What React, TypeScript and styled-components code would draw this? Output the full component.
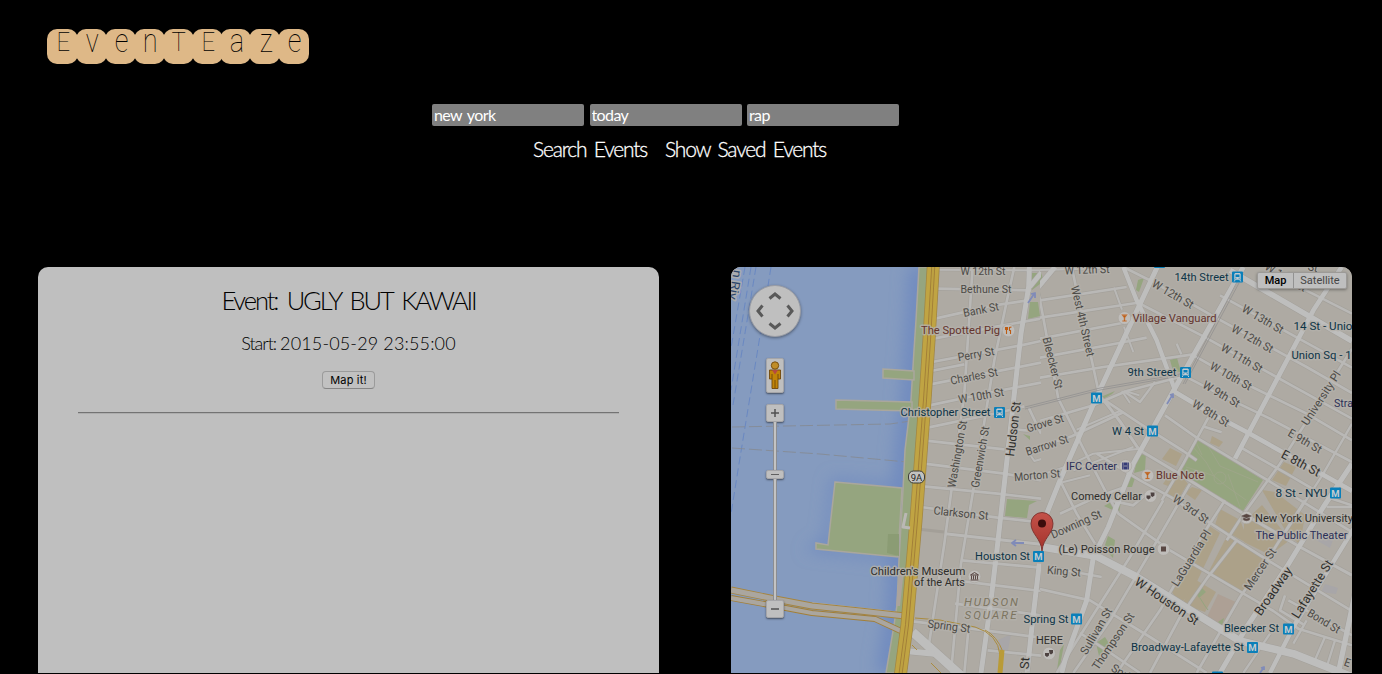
import React from "react";
import styled, { createGlobalStyle } from "styled-components";

const GlobalStyle = createGlobalStyle`
  * { box-sizing: border-box; }
  html, body { margin: 0; background: #000; overflow: hidden; }
`;

const Page = styled.div`
  display: flex;
  flex-direction: column;
  width: 1382px;
  height: 674px;
  padding-bottom: 1px;
  overflow: hidden;
  background: #000;
  font-family: Lato, "Open Sans", sans-serif;
`;

const Header = styled.header`
  display: flex;
  padding: 28.5px 0 0 47px;
  height: 104px;
`;

const LogoTile = styled.span`
  display: flex;
  justify-content: center;
  width: 31px;
  height: 35.5px;
  margin-right: -2.1px;
  border-radius: 10px;
  background: burlywood;
`;

const LogoLetter = styled.span<{ $small?: boolean }>`
  font-family: Roboto, sans-serif;
  font-weight: 100;
  font-size: ${(p) => (p.$small ? 34 : 26)}px;
  line-height: ${(p) => (p.$small ? 22 : 27.5)}px;
  transform: translateX(1px) scaleX(${(p) => (p.$small ? 0.8 : 0.92)});
  color: #000;
`;

const SearchArea = styled.section`
  display: flex;
  flex-direction: column;
  height: 163px;
`;

const Fields = styled.div`
  display: flex;
  gap: 5.5px;
  padding-left: 432px;
`;

const Field = styled.input`
  width: 152px;
  height: 22px;
  padding: 0 2px 1px;
  border: 0;
  border-radius: 2px;
  background: #808080;
  color: #fff;
  font-family: Lato, sans-serif;
  font-size: 16px;
  letter-spacing: -0.6px;
  word-spacing: 2px;
  outline: none;
`;

const Actions = styled.div`
  display: flex;
  gap: 17px;
  padding: 9px 0 0 533px;
`;

const Action = styled.button<{ $w: number }>`
  width: ${(p) => p.$w}px;
  padding: 0;
  border: 0;
  background: none;
  color: #fff;
  font-family: Lato, sans-serif;
  font-size: 21px;
  font-weight: 300;
  -webkit-text-stroke: 0.3px #fff;
  letter-spacing: -1.2px;
  word-spacing: 3px;
  line-height: 28px;
  text-align: left;
  white-space: nowrap;
`;

const Panels = styled.main`
  display: flex;
  flex: 1;
  gap: 72px;
  padding-left: 38px;
  min-height: 0;
`;

const EventPanel = styled.section`
  display: flex;
  flex-direction: column;
  align-items: center;
  width: 621px;
  padding: 0 40px;
  border-radius: 10px 10px 0 0;
  background: #bfbfbf;
  color: #000;
`;

const Title = styled.h2`
  margin: 18px 0 0;
  font-size: 25.5px;
  font-weight: 300;
  letter-spacing: -2.1px;
  word-spacing: 4.5px;
  line-height: 31px;
  white-space: nowrap;
`;

const Start = styled.p`
  margin: 15px 0 0;
  font-size: 18px;
  font-weight: 300;
  line-height: 24px;
`;

const StartLabel = styled.span`
  margin-right: -1px;
  letter-spacing: -1px;
`;

const StartTime = styled.span`
  letter-spacing: 0.14px;
`;

const MapIt = styled.button`
  width: 53px;
  height: 18px;
  margin-top: 16px;
  padding: 0;
  border: 1px solid #9b9b9b;
  border-bottom-color: #858585;
  border-radius: 4px;
  background: #c1c1c1;
  font-family: Inter, sans-serif;
  font-size: 11px;
  letter-spacing: 0.15px;
  line-height: 15px;
  color: #000;
`;

const Divider = styled.hr`
  width: 100%;
  height: 2px;
  margin: 23px 0 0;
  border: 0;
  border-top: 1px solid #737373;
  border-bottom: 1px solid #adadad;
`;

const MapPanel = styled.section`
  position: relative;
  width: 621px;
  overflow: hidden;
  border-radius: 10px 10px 0 0;
  background: #aeaaa3;
`;

const MapCanvas = styled.svg`
  display: block;
  width: 621px;
  height: 406px;
  font-family: Roboto, sans-serif;
`;

const Controls = styled.div`
  position: absolute;
  top: 18px;
  left: 18px;
  display: flex;
  flex-direction: column;
  align-items: center;
  width: 52px;
`;

const PanWheel = styled.div`
  width: 52px;
  height: 52px;
  border-radius: 50%;
  border: 1px solid #9a9da5;
  background: #bfbfbf;
  box-shadow: 0 1px 3px rgba(0, 0, 0, 0.4);
`;

const Box = styled.div<{ $h: number; $mt?: number }>`
  display: flex;
  align-items: center;
  justify-content: center;
  width: 18px;
  height: ${(p) => p.$h}px;
  margin-top: ${(p) => p.$mt ?? 0}px;
  border: 1px solid #a5a5a8;
  border-radius: 2px;
  background: #bfbfbf;
  box-shadow: 0 1px 2px rgba(0, 0, 0, 0.5);
`;

const Rail = styled.div<{ $h: number }>`
  width: 4px;
  height: ${(p) => p.$h}px;
  border: solid #8b8d92;
  border-width: 0 1px;
  background: #c3c3c3;
`;

const TypeSwitch = styled.div`
  position: absolute;
  top: 5px;
  left: 526px;
  display: flex;
  height: 17px;
  border: 1px solid #9c9a97;
  border-radius: 2px;
  background: #bfbfbf;
  box-shadow: 0 1px 3px rgba(0, 0, 0, 0.35);
`;

const TypeOption = styled.button<{ $w: number; $on?: boolean }>`
  width: ${(p) => p.$w}px;
  padding: 0;
  border: 0;
  border-right: ${(p) => (p.$on ? "1px solid #929292" : "0")};
  background: none;
  font-family: Roboto, sans-serif;
  font-size: 11px;
  font-weight: ${(p) => (p.$on ? 500 : 400)};
  line-height: 15px;
  color: ${(p) => (p.$on ? "#000" : "#454545")};
`;

type Street = [string, number];

// Streets are drawn at three units per pixel, one sheet for each half of the map.
const westStreets: Street[] = [
  ["M620 8L930 10", 7],
  ["M618 65L900 70", 9],
  ["M612 155L790 115L890 100", 9],
  ["M608 215L800 178L930 155", 9],
  ["M603 285L870 235L930 222", 9],
  ["M600 312L700 292", 9],
  ["M598 352L930 287", 9],
  ["M595 415L800 372L930 347", 9],
  ["M590 482L800 438L880 418", 9],
  ["M585 521L820 547", 9],
  ["M580 590L820 620L930 640", 9],
  ["M578 658L800 680L930 695", 9],
  ["M570 720L800 752L930 766", 9],
  ["M642 800L930 832", 10],
  ["M692 880L930 902", 9],
  ["M672 940L930 972", 9],
  ["M672 1010L930 1045", 9],
  ["M545 1063L720 1085L930 1112", 9],
  ["M770 1150L930 1166", 9],
  ["M725 0L700 380L660 680L640 830L595 1125", 9],
  ["M850 0L830 90L790 280L725 680L690 890L660 1218", 9],
  ["M712 1090L700 1218", 9],
  ["M893 422L930 500M860 488L905 492", 9],
  ["M892 555L910 582L935 575", 7],
];

const westAvenues: Street[] = [
  ["M895 0L893 60L870 200L830 560L800 830L780 1000L750 1218", 15],
  ["M896 60L945 0", 15],
  ["M925 890L905 1060L888 1218", 15],
  ["M545 1095L690 1226", 27],
  ["M500 1150L610 1160", 18],
];

const eastStreets: Street[] = [
  ["M-40 10L110 6L210 2", 7],
  ["M0 100L260 60", 9],
  ["M-100 165L0 152L288 108", 9],
  ["M0 215L262 165", 9],
  ["M-100 290L0 272L238 228L320 212", 9],
  ["M-100 352L0 332L190 300L460 262", 9],
  ["M222 62L246 128M252 180L280 255M246 372L270 408", 7],
  ["M410 230L424 262", 8],
  ["M0 462L160 415L260 372L420 330", 9],
  ["M-20 545L95 508L250 436", 9],
  ["M0 625L75 600L160 560L300 545", 7],
  ["M110 488L240 432M100 610L280 540", 7],
  ["M60 740L170 690L255 660", 9],
  ["M50 650L150 625", 7],
  ["M195 400L300 470L430 552L470 580", 9],
  ["M192 398L240 465L300 552", 9],
  ["M250 372L300 405L345 345", 8],
  ["M256 372L298 385", 7],
  ["M-25 0L0 100L55 395L130 545L200 680L235 740L390 850L580 962L700 1032L775 1085L936 1135", 9],
  ["M95 0L178 385L240 462L300 552", 9],
  ["M60 640L110 740L165 830", 9],
  ["M250 0L340 45L520 148L800 300L936 378", 9],
  ["M290 105L490 208L760 358L936 455", 9],
  ["M455 262L575 330L800 440L936 520", 9],
  ["M430 325L545 385L690 455L936 585", 9],
  ["M540 85L936 302", 9],
  ["M700 20L936 140", 9],
  ["M375 445L470 512L680 638L936 795", 9],
  ["M600 540L740 620L860 690L936 715", 9],
  ["M505 452L430 590L365 700", 9],
  ["M488 478L545 496", 9],
  ["M300 550L400 610L610 740L780 840L936 925", 10],
  ["M170 560L300 640L395 692L590 820L700 890L936 1032", 9],
  ["M210 700L280 715L320 680", 9],
  ["M-5 965L150 1000L330 1110L500 1218", 9],
  ["M120 1098L200 1150L300 1218", 9],
  ["M22 900L185 930", 9],
  ["M936 245L720 590L610 742L560 820", 9],
  ["M555 700L490 800L360 1030L230 1218", 9],
  ["M450 650L340 840L210 1060L100 1218", 9],
  ["M370 700L270 870L165 1035L50 1218", 9],
  ["M590 820L500 935L420 1050L330 1218", 9],
  ["M795 700L700 850L600 990L470 1218", 9],
  ["M936 470L850 620L720 820", 8],
  ["M860 720L936 720", 8],
  ["M735 985L720 1030L790 1072M745 1000L936 1105", 9],
  ["M800 1060L760 1130M855 1110L820 1190M885 1120L860 1200", 8],
  ["M690 1100L610 1218M740 1120L690 1218", 8],
];

const eastAvenues: Street[] = [
  ["M45 0L-30 90", 15],
  ["M352 0L172 385L60 640L0 790L-10 870L-30 1060L-48 1218", 15],
  ["M250 0L290 100L350 220L405 370", 13],
  ["M610 0L400 372L280 590L205 780L160 870L140 1000L75 1180L65 1218", 15],
  ["M905 0L820 130L630 490L585 575", 14],
  ["M570 10L820 155L936 222", 17],
  ["M400 372L515 440L620 495L936 672", 14],
  ["M936 590L850 720L740 900L620 1080L540 1218", 15],
  ["M950 770L760 1080L690 1218", 13],
  ["M-90 830L20 842L170 868L290 930L600 1122L760 1160L950 1235", 23],
  ["M945 980L895 1218", 16],
];

const parks = [
  "M1032 273L1041 273L1044 281L1032 290Z",
  "M1030 302L1038 302L1040 316L1028 319Z",
  "M1007 499L1037 501L1029 505L1027 518L1005 516Z",
  "M1197 438L1263 480L1243 511L1177 471Z",
  "M1104 506L1122 496L1119 513Z",
  "M1108 536L1115 540L1113 558L1104 548Z",
  "M1138 456L1146 453L1145 470L1134 473Z",
  "M1131 477L1136 475L1132 487L1127 487Z",
  "M1083 600L1090 600L1082 613Z",
  "M1096 643L1105 637L1110 645L1099 656Z",
  "M1060 650L1064 644L1060 666L1057 670Z",
  "M1170 360L1177 358L1181 372L1173 371Z",
  "M1196 593L1202 588L1206 592L1199 598Z",
  "M1218 622L1224 618L1222 626Z",
  "M1138 280L1144 278L1139 292L1136 290Z",
  "M1103 396L1115 391L1112 394L1103 399Z",
  "M1023 434L1030 440L1030 436L1026 435Z",
];

const campus = [
  "M1228 534L1268 559L1242 592L1208 573Z",
  "M1174 480L1186 486L1178 500L1163 494Z",
  "M1185 480L1188 484L1180 491L1163 484L1172 470Z",
  "M1192 487L1202 490L1195 500L1185 493Z",
  "M1208 525L1220 533L1192 592L1180 604L1172 592Z",
  "M1220 509L1240 520L1250 545L1215 525Z",
  "M1244 522L1262 505L1290 540L1270 555L1244 542Z",
  "M1284 462L1296 467L1286 486L1272 480Z",
  "M1262 490L1275 492L1305 515L1300 545L1285 530Z",
  "M1170 448L1182 454L1176 466L1162 459Z",
  "M1212 436L1223 442L1219 447L1210 443Z",
  "M1196 580L1216 592L1205 612L1182 604Z",
];

const NAVY = "#0d3447";
const BROWN = "#64342d";
const INDIGO = "#2c3058";
const GREY = "#4c4a46";
const DARK = "#2f2e2b";

type Label = {
  t: string; x: number; y: number; w: number; r?: number; c?: string; s?: number; italic?: boolean;
};

const labels: Label[] = [
  { t: "W 12th St", x: 983, y: 270.5, w: 45 },
  { t: "W 12th St", x: 1087, y: 269.5, w: 45, r: -2 },
  { t: "Bethune St", x: 986, y: 289, w: 51 },
  { t: "Bank St", x: 981, y: 309.5, w: 36, r: -11 },
  { t: "The Spotted Pig", x: 960.5, y: 330, w: 79, c: BROWN },
  { t: "Perry St", x: 976, y: 354, w: 37, r: -10 },
  { t: "Charles St", x: 974, y: 376, w: 48, r: -11 },
  { t: "W 10th St", x: 981, y: 395.5, w: 46, r: -10 },
  { t: "Christopher Street", x: 945.5, y: 412, w: 90, c: NAVY },
  { t: "Hudson St", x: 1013, y: 429, w: 55, r: -83, s: 12.5, c: DARK },
  { t: "Bleecker St", x: 1053, y: 363, w: 53, r: 76 },
  { t: "West 4th Street", x: 1083, y: 321, w: 72, r: 77 },
  { t: "Grove St", x: 1045, y: 423, w: 38, r: -17 },
  { t: "Barrow St", x: 1047, y: 445, w: 44, r: -18 },
  { t: "Morton St", x: 1037, y: 475, w: 46, r: -5 },
  { t: "Clarkson St", x: 961, y: 513, w: 55, r: 6 },
  { t: "Washington St", x: 957, y: 454, w: 68, r: -80 },
  { t: "Greenwich St", x: 980, y: 457, w: 62, r: -80 },
  { t: "Downing St", x: 1076, y: 524, w: 54, r: -24 },
  { t: "King St", x: 1064, y: 571, w: 34, r: 5 },
  { t: "Children's Museum", x: 918, y: 571, w: 95, c: DARK },
  { t: "of the Arts", x: 939.5, y: 582, w: 51, c: DARK },
  { t: "HUDSON", x: 991, y: 602, w: 54, c: "#7c745f", italic: true },
  { t: "SQUARE", x: 990.5, y: 614.5, w: 52, c: "#7c745f", italic: true },
  { t: "Spring St", x: 949, y: 626, w: 43, r: 7 },
  { t: "Spring St", x: 1046, y: 619, w: 45, c: NAVY },
  { t: "HERE", x: 1049.5, y: 640, w: 27, c: DARK },
  { t: "Houston St", x: 1002.5, y: 556, w: 55, c: NAVY },
  { t: "(Le) Poisson Rouge", x: 1106.5, y: 549, w: 96, c: DARK },
  { t: "Comedy Cellar", x: 1106.5, y: 496, w: 71, c: DARK },
  { t: "IFC Center", x: 1091.5, y: 466, w: 51, c: INDIGO },
  { t: "W 4 St", x: 1128, y: 431, w: 32, c: NAVY },
  { t: "Blue Note", x: 1180, y: 475, w: 48, c: BROWN },
  { t: "14th Street", x: 1201.5, y: 277, w: 54, c: NAVY },
  { t: "Village Vanguard", x: 1174.5, y: 318, w: 84, c: BROWN },
  { t: "9th Street", x: 1152, y: 372, w: 49, c: NAVY },
  { t: "W 12th St", x: 1173, y: 294, w: 46, r: 30 },
  { t: "W 13th St", x: 1263, y: 319, w: 46, r: 30 },
  { t: "W 12th St", x: 1252.5, y: 338.5, w: 46, r: 29 },
  { t: "W 11th St", x: 1242, y: 358, w: 46, r: 30 },
  { t: "W 10th St", x: 1231, y: 376, w: 46, r: 29 },
  { t: "W 9th St", x: 1221.5, y: 394, w: 41, r: 30 },
  { t: "W 8th St", x: 1211, y: 413, w: 41, r: 31 },
  { t: "W 13th St", x: 1286, y: 277, w: 46, r: 30 },
  { t: "St", x: 1313, y: 267, w: 10, r: 12 },
  { t: "14 St - Unio", x: 1323, y: 326, w: 59, c: NAVY },
  { t: "Union Sq - 1", x: 1321.5, y: 355, w: 60, c: NAVY },
  { t: "Stra", x: 1343.5, y: 403, w: 19, c: INDIGO },
  { t: "University Pl", x: 1321, y: 398, w: 62, r: -57 },
  { t: "E 9th St", x: 1305, y: 441, w: 37, r: 30 },
  { t: "E 8th St", x: 1301, y: 463, w: 42, r: 28, s: 12.5, c: DARK },
  { t: "8 St - NYU", x: 1301.5, y: 493, w: 52, c: NAVY },
  { t: "New York University", x: 1304, y: 518, w: 98, c: DARK },
  { t: "The Public Theater", x: 1301.5, y: 535, w: 92, c: INDIGO },
  { t: "W 3rd St", x: 1191, y: 509, w: 41, r: 35 },
  { t: "LaGuardia Pl", x: 1191, y: 558, w: 64, r: -58 },
  { t: "Mercer St", x: 1260, y: 569, w: 48, r: -56 },
  { t: "Broadway", x: 1273, y: 591, w: 56, r: -55, s: 12.5, c: DARK },
  { t: "Lafayette St", x: 1312, y: 589, w: 66, r: -58, s: 12.5, c: DARK },
  { t: "W Houston St", x: 1167, y: 601, w: 74, r: 34, s: 12.5, c: DARK },
  { t: "Bleecker St", x: 1251.5, y: 628, w: 55, c: NAVY },
  { t: "Broadway-Lafayette St", x: 1187.5, y: 647, w: 113, c: NAVY },
  { t: "Bond St", x: 1324, y: 621, w: 36, r: 31 },
  { t: "Sullivan St", x: 1096, y: 631, w: 52, r: -60 },
  { t: "Thompson St", x: 1113, y: 641, w: 66, r: -56 },
  { t: "k St", x: 1024, y: 668, w: 22, r: -85, s: 12.5, c: DARK },
  { t: "Spring", x: 1126, y: 675, w: 32, r: 31 },
  { t: "E", x: 1347.5, y: 662.5, w: 6, r: 20 },
  { t: "n Riv", x: 735.5, y: 285, w: 30, r: 100, c: "#2d466b", s: 12 },
];

const metros = [[1096.5, 398], [1152.5, 431], [1335.5, 493], [1038.5, 556.5], [1076.5, 619], [1288.5, 629], [1252.5, 647.5], [1217.5, 677], [1159.5, 262.5]];
const trams = [[1237.5, 277], [999.5, 412.5], [1185.5, 372.5]];

const MapLabel = ({ t, x, y, w, r = 0, c = GREY, s = 11.5, italic }: Label) => (
  <text
    transform={`translate(${x} ${y}) rotate(${r})`}
    dy="0.36em"
    textAnchor="middle"
    textLength={w}
    lengthAdjust={italic ? "spacing" : "spacingAndGlyphs"}
    fontSize={s}
    fontStyle={italic ? "italic" : "normal"}
    fill={c}
    stroke="#b4b1ab"
    strokeWidth={3}
    strokeOpacity={0.8}
    strokeLinejoin="round"
    paintOrder="stroke"
  >
    {t}
  </text>
);

const Metro = ({ x, y }: { x: number; y: number }) => (
  <g transform={`translate(${x - 5.5} ${y - 5.5})`}>
    <rect width="11" height="11" rx="1" fill="#0a7fb9" />
    <text x="5.5" y="9" textAnchor="middle" fontSize="9.500" fontWeight="700" fill="#c5ccd0">M</text>
  </g>
);

const Tram = ({ x, y }: { x: number; y: number }) => (
  <g transform={`translate(${x - 5.5} ${y - 5.5})`}>
    <rect width="11" height="11" rx="1" fill="#0a7fb9" />
    <path d="M3.2 1.5h4.6l.9 1v5.8H2.300V2.500z" fill="#c3cbd0" />
    <path d="M3.500 3h4v2.500h-4z" fill="#0a7fb9" />
    <path d="M3.300 6.700h1M6.700 6.700h1" stroke="#0a7fb9" />
    <path d="M3.200 8.300L2.200 10M7.800 8.300L8.800 10" stroke="#c3cbd0" />
  </g>
);

const Poi = ({ x, y, children }: { x: number; y: number; children: React.ReactNode }) => (
  <g transform={`translate(${x} ${y})`}>
    <circle r="6.300" fill="#bfbdba" stroke="#a5a19a" strokeWidth=".5" />
    {children}
  </g>
);

const Cocktail = () => <path d="M-3-3.500H3L.6-.3V2.500H2V3.500H-2V2.500H-.6V-.3ZM-1.500-2.500H1.500" fill="#bd5c12" stroke="#c79a78" strokeWidth=".4" />;
const Masks = () => <path d="M-4-.5h4v2.500l-2 1.500-2-1.500zM0-3.500h4v3L2 1 .5 0z" fill="#4d4241" />;

const SHORE = "M919 267L916 320L914 350L911 400L905 450L903 490L899 560L897 605L894 625L886 673";
const HIGHWAY = "M933.500 262L929 340L925 400L920 467L916 520L910 590L907 625L900 678";

const StreetSheet = ({ x, minor, major }: { x: number; minor: Street[]; major: Street[] }) => (
  <g transform={`translate(${x} 267) scale(0.33333)`} fill="none" strokeLinejoin="round">
    {minor.map(([d, w]) => <path key={d} d={d} stroke="#a4a19b" strokeWidth={w + 3} />)}
    {major.map(([d, w]) => <path key={d} d={d} stroke="#a3a09b" strokeWidth={w + 3} />)}
    {minor.map(([d, w]) => <path key={d} d={d} stroke="#b9b8b6" strokeWidth={w - 1} />)}
    {major.map(([d, w]) => <path key={d} d={d} stroke="#bebebd" strokeWidth={w} />)}
  </g>
);

const CityMap = () => (
  <MapCanvas viewBox="731 267 621 406">
    <defs>
      <clipPath id="water"><path d={`${SHORE}L731 673V267Z`} /></clipPath>
      <clipPath id="west"><path d="M731 267H1041V673H731Z" /></clipPath>
      <clipPath id="east"><path d="M1040 267H1352V673H1040Z" /></clipPath>
      <filter id="soft" x="-60%" y="-10%" width="220%" height="120%"><feGaussianBlur stdDeviation="8" /></filter>
      <linearGradient id="pin" x1="0" y1="0" x2="0" y2="1">
        <stop offset="0" stopColor="#c4524a" />
        <stop offset="1" stopColor="#a3332b" />
      </linearGradient>
    </defs>
    <rect x="731" y="267" width="621" height="406" fill="#aeaaa3" />
    <g clipPath="url(#water)">
      <rect x="731" y="267" width="200" height="406" fill="#859bbf" />
      <g filter="url(#soft)" fill="none" stroke="#6f8abf">
        <path d={SHORE} strokeWidth="20" />
        <path d="M835 482L902 488L898 557L816 548L828 540Z" strokeWidth="8" />
      </g>
      <g stroke="#6686c2" fill="none" strokeDasharray="8 4" strokeWidth=".9">
        <path d="M745 267L731 348M751 267L731 390M756 267L733 405M771 267L758 348L738 470L731 514" />
      </g>
      <g stroke="#85898f" fill="none" strokeDasharray="13 4" strokeWidth=".8">
        <path d="M732 427L890 424L918 420M732 448L820 454L918 463" />
      </g>
    </g>
    <g fill="#95a57f" stroke="#aaa79d" strokeWidth="1.500">
      <path d="M919 267L916 320L914 350L911 400L905 450L903 490L899 560L897 605L894 625L886 673H900L908 625L912 560L919 470L925 380L930 267Z" />
      <path d="M883 369L914 371V380L883 378ZM836 400L912 402V411L836 409Z" />
      <path d="M835 482L902 488L898 557L816 549V543L828 545Z" />
    </g>
    <path d="M888 534H899V556L887 553Z" fill="#8b9c74" />
    <path d="M899 572L904 570L900 606H896Z" fill="#aba39c" />
    <path d="M998 640L1011 634L1008 650L1000 655ZM1325 584L1338 588L1336 594L1321 592ZM1315 530L1333 540L1330 548L1316 540Z" fill="#a8a6a8" />
    {campus.map((d) => <path key={d} d={d} fill="#aca189" />)}
    <path d="M1218 594L1238 603L1220 628L1207 617Z" fill="#ada095" />
    {parks.map((d) => <path key={d} d={d} fill="#95a57f" />)}
    <path d="M1194 448L1206 462L1214 476L1226 486L1246 500M1186 467L1206 473L1214 476M1208 446L1220 466L1258 482M1228 474L1240 507M1196 442L1202 455" fill="none" stroke="#9fa68b" strokeWidth=".8" />
    <circle cx="1220" cy="478" r="6" fill="none" stroke="#9fa68b" strokeWidth=".8" />
    <path d="M1200 598L1205 606L1208 610" stroke="#95a57f" fill="none" />
    <path d="M917 529L944 532" stroke="#a39f98" strokeWidth="3" />
    <g clipPath="url(#west)"><StreetSheet x={731} minor={westStreets} major={westAvenues} /></g>
    <g clipPath="url(#east)"><StreetSheet x={1040} minor={eastStreets} major={eastAvenues} /></g>
    <g fill="none" strokeLinejoin="round">
      <g stroke="#929191" strokeWidth=".8">
        <path d="M1237 282L1183 384M1239 283L1185 384M1025 407L1100 388L1180 374M1025 409L1100 390L1180 376" />
      </g>
      <path d="M812 603L895 612" stroke="#b9b9b7" strokeWidth="1.500" />
      <path d="M731 590L775 599L812 606L860 611L905 616" stroke="#a6853f" strokeWidth="7" />
      <path d="M731 590L775 599L812 606L860 611L905 616" stroke="#aaa69f" strokeWidth="5.200" />
      <path d="M731 598L775 606L812 613L875 619L903 632" stroke="#a27f38" strokeWidth="6" />
      <path d="M731 598L775 606L812 613L875 619L903 632" stroke="#aaa69f" strokeWidth="4.200" />
      <path d="M915 618L940 620L975 627Q998 634 1000 655" stroke="#aa8c40" strokeWidth="1" />
      <path d="M985 630Q997 636 1003 652" stroke="#aa8c40" strokeWidth="1" />
      <path d="M1002 650L1000 673" stroke="#b99b37" strokeWidth="5" />
      <path d="M912 645L917 650M931 663L941 673" stroke="#aa8c40" strokeWidth="1" />
      <path d={HIGHWAY} stroke="#a18643" strokeWidth="13" />
      <path d={HIGHWAY} stroke="#c0a443" strokeWidth="11.500" />
      <path d={HIGHWAY} stroke="#a17e38" strokeWidth="4" />
      <path d={HIGHWAY} stroke="#bda142" strokeWidth="2.200" />
      <path d="M906 513L903 527L910 528" stroke="#bab8b5" strokeWidth="3" />
      <g stroke="#808bb8" strokeWidth="1.800">
        <path d="M1028 303L1034 294M1031 294L1035 293L1035 298M1024 543H1012M1016 540L1012 543L1016 546" />
        <path d="M1167 404L1173 394M1170 395L1173 394V398M1260 673L1264 667M1261 668L1264 667V670" />
      </g>
    </g>
    {labels.map((l) => <MapLabel key={`${l.t}${l.x}`} {...l} />)}
    {metros.map(([x, y]) => <Metro key={x} x={x} y={y} />)}
    {trams.map(([x, y]) => <Tram key={x} x={x} y={y} />)}
    <rect x="908.500" y="471" width="16" height="12" rx="5" fill="#c2c2bf" stroke="#3d3c38" />
    <text x="916.500" y="480.500" textAnchor="middle" fontSize="9.500" fontWeight="400" fill="#24241f">9A</text>
    <Poi x={1008.5} y={330.5}><path d="M-3-3.500V-1h2v-2.500M-2-3.500V3.500M2 3.500V0H1V-3L3-3.500" fill="none" stroke="#bd5c12" strokeWidth="1.100" /></Poi>
    <Poi x={1124.5} y={318}><Cocktail /></Poi>
    <Poi x={1147.5} y={475.5}><Cocktail /></Poi>
    <Poi x={1125.5} y={466}><path d="M-3.500-3.500h7v7h-7z" fill="#343a77" /><path d="M-2.300-3.500v7M2.300-3.500v7" stroke="#bfbdba" strokeDasharray="1 1" /><path d="M-1.500 0h3" stroke="#bfbdba" strokeWidth=".7" /></Poi>
    <Poi x={1150.5} y={496}><Masks /></Poi>
    <Poi x={1049} y={653.5}><Masks /></Poi>
    <Poi x={1163.5} y={549}><path d="M-2.500-2.500h5v5h-5z" fill="#594743" /></Poi>
    <Poi x={1246.5} y={517.5}><path d="M-5-1.500L0-3.500L5-1.500L0 .5ZM-3 .3L0 1.500L3 .3V2.500Q0 4-3 2.500ZM-4.500-1v4" fill="#594743" stroke="#594743" strokeWidth=".4" /></Poi>
    <Poi x={974.5} y={576.5}><path d="M-4-1.500L0-4L4-1.500ZM-4 3.500H4M-3-1V3M-1-1V3M1-1V3M3-1V3" fill="none" stroke="#594743" /></Poi>
    <path d="M1042 551C1041 538 1031 534 1031 523.500A11 11 0 0 1 1053 523.500C1053 534 1043 538 1042 551Z" fill="url(#pin)" stroke="#7b302b" strokeWidth=".9" />
    <circle cx="1042" cy="523.500" r="4" fill="#3c0d0c" />
  </MapCanvas>
);

const logo: [string, boolean][] = [
  ["E", false], ["v", true], ["e", true], ["n", true], ["T", false],
  ["E", false], ["a", true], ["z", true], ["e", true],
];

export default function App() {
  return (
    <Page>
      <GlobalStyle />
      <Header>
        {logo.map(([ch, small], i) => (
          <LogoTile key={i}><LogoLetter $small={small}>{ch}</LogoLetter></LogoTile>
        ))}
      </Header>
      <SearchArea>
        <Fields>
          <Field defaultValue="new york" />
          <Field defaultValue="today" />
          <Field defaultValue="rap" />
        </Fields>
        <Actions>
          <Action $w={115}>Search Events</Action>
          <Action $w={162}>Show Saved Events</Action>
        </Actions>
      </SearchArea>
      <Panels>
        <EventPanel>
          <Title>Event: UGLY BUT KAWAII</Title>
          <Start><StartLabel>Start:</StartLabel> <StartTime>2015-05-29 23:55:00</StartTime></Start>
          <MapIt>Map it!</MapIt>
          <Divider />
        </EventPanel>
        <MapPanel>
          <CityMap />
          <Controls>
            <PanWheel>
              <svg width="50" height="50" viewBox="0 0 50 50" fill="none" stroke="#595959" strokeWidth="3">
                <path d="M19.500 12.500L25 8L30.500 12.500M19.500 37.500L25 42L30.500 37.500M12.500 19.500L8 25L12.500 30.500M37.500 19.500L42 25L37.500 30.500" />
              </svg>
            </PanWheel>
            <Box $h={35} $mt={21}>
              <svg width="14" height="29" viewBox="0 0 14 29" stroke="#70470a" strokeWidth=".9">
                <path d="M1.500 9H12.500V18H10V27.500H4V18H1.500Z" fill="#c18408" />
                <path d="M4 9L7 13.500L10 9Z" fill="#b44a42" stroke="none" />
                <path d="M7 19V27M4 13V18M10 13V18" />
                <circle cx="7" cy="4.500" r="3.700" fill="#c08d27" />
              </svg>
            </Box>
            <Box $h={18} $mt={11}>
              <svg width="10" height="10" stroke="#515151" strokeWidth="1.500"><path d="M1 5H9M5 1V9" /></svg>
            </Box>
            <Rail $h={48} />
            <Box $h={9}>
              <svg width="10" height="3" stroke="#606060"><path d="M1 1.500H9" /></svg>
            </Box>
            <Rail $h={121} />
            <Box $h={18}>
              <svg width="10" height="10" stroke="#515151" strokeWidth="1.500"><path d="M1 5H9" /></svg>
            </Box>
          </Controls>
          <TypeSwitch>
            <TypeOption $w={36} $on>Map</TypeOption>
            <TypeOption $w={52}>Satellite</TypeOption>
          </TypeSwitch>
        </MapPanel>
      </Panels>
    </Page>
  );
}
